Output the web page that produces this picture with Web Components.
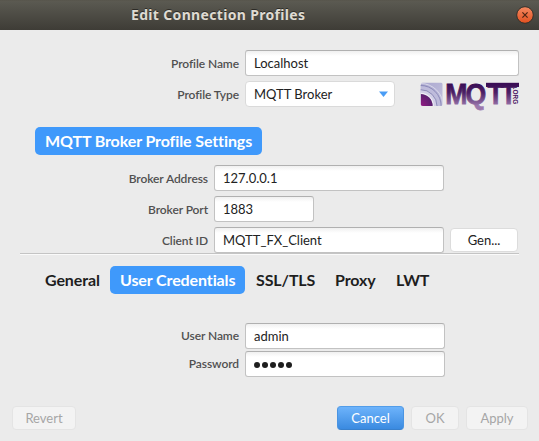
<!DOCTYPE html>
<html lang="en">
<head>
<meta charset="utf-8">
<title>Edit Connection Profiles</title>
<style>
html,body{margin:0;height:100%;overflow:hidden;background:#ebebeb}
body{font-family:Lato,"Liberation Sans",sans-serif;color:#1e1e1e}
</style>
</head>
<body>
<profile-dialog></profile-dialog>
<script>
const define = (name, html) => customElements.define(name, class extends HTMLElement {
  constructor() {
    super();
    const t = document.createElement('template');
    t.innerHTML = html;
    this.attachShadow({ mode: 'open' }).append(t.content.cloneNode(true));
  }
});

define('title-bar', `<style>
:host{display:flex;justify-content:space-between;align-items:center;height:30px;box-sizing:border-box;padding:0 5px 0 131px;background:linear-gradient(#55534a,#5c5a51 1px,#595850 3px,#3e3c36);color:#dfdbd2;font:700 14px/30px "Noto Sans","Open Sans",sans-serif;text-shadow:0 -1px 0 #2c2b27}
.t{letter-spacing:.33px}
svg{display:block;width:18px;height:18px}
</style><span class="t"><slot></slot></span>
<svg viewBox="0 0 18 18"><defs><linearGradient id="g" x2="0" y2="1"><stop stop-color="#f58a62"/><stop offset="1" stop-color="#e2501f"/></linearGradient></defs><circle cx="9" cy="9" r="8.3" fill="url(#g)" stroke="#33302a" stroke-width="1"/><path d="M6.4 6.4l5.2 5.2M11.6 6.4l-5.2 5.2" stroke="#4d2413" stroke-width="1.2"/></svg>`);

define('form-label', `<style>
:host{display:block;text-align:right;font-size:12px;font-weight:600;line-height:27px;height:26px;color:#505050;white-space:nowrap;letter-spacing:-.09px}
</style><slot></slot>`);

define('text-field', `<style>
:host{display:block;box-sizing:border-box;height:26px;border:1px solid #c2c2c2;border-top-color:#b0b0b0;border-radius:3px;background:linear-gradient(#f0f0f0,#fff 5px);padding-left:8px;font-size:13px;line-height:24px;white-space:nowrap;color:#222}
</style><slot></slot>`);

define('password-dots', `<style>
:host{display:flex;gap:1.6px;align-items:center;height:26px}
i{width:6.4px;height:6.4px;border-radius:50%;background:#1e1e1e}
</style><i></i><i></i><i></i><i></i><i></i>`);

define('combo-box', `<style>
:host{display:flex;box-sizing:border-box;width:150px;height:26px;border:1px solid #dadada;border-radius:4px;background:#fff;padding:0 6px 0 8px;font-size:13px;line-height:25px;align-items:center;justify-content:space-between;color:#222}
svg{display:block;width:9px;height:6px}
</style><slot></slot><svg viewBox="0 0 9 6"><path d="M0 .5h9L4.5 6z" fill="#4a9df5"/></svg>`);

define('push-button', `<style>
:host{display:block;box-sizing:border-box;height:24px;border:1px solid #dcdcdc;border-radius:4px;background:#fff;font-size:13px;line-height:23px;text-align:center;color:#222}
:host([disabled]){border-color:#e4e4e4;background:#f3f3f3;color:#a6a6a6}
:host([primary]){border-color:#529de9 #4a94e2 #3880cd;background:linear-gradient(#6db3fb,#3a8ae0);color:#fff}
</style><slot></slot>`);

define('tab-pill', `<style>
:host{display:block;height:28px;border-radius:5px;padding:0 10px;font-size:16px;font-weight:700;line-height:28px;letter-spacing:-.11px;white-space:nowrap;box-sizing:border-box;text-align:left}
:host([selected]){background:#3f99fb;color:#fff}
</style><slot></slot>`);

define('mqtt-logo', `<style>
:host{display:block;width:99px;height:25px}svg{display:block;overflow:visible}
</style><svg width="99" height="25" viewBox="0 0 99 25">
<defs><linearGradient id="m" gradientUnits="userSpaceOnUse" x1="0" x2="0" y1="2" y2="24"><stop stop-color="#3a0d55"/><stop offset=".4" stop-color="#4c2065"/><stop offset="1" stop-color="#9b78ad"/></linearGradient>
<linearGradient id="b" x2="1" y2="1"><stop stop-color="#a9a6ce"/><stop offset="1" stop-color="#c5c3df"/></linearGradient>
<radialGradient id="p" cx="0" cy="1" r="1" gradientUnits="objectBoundingBox"><stop stop-color="#951b84"/><stop offset="1" stop-color="#59206f"/></radialGradient>
<clipPath id="c"><rect y=".5" width="22" height="23.5" rx="2"/></clipPath></defs>
<g transform="translate(.7 0)" clip-path="url(#c)"><rect y=".5" width="22" height="24" fill="url(#b)"/>
<circle cx="0" cy="24" r="22.5" fill="none" stroke="#d9d8ea" stroke-width="1"/>
<circle cx="0" cy="24" r="20.5" fill="#bebbdb" stroke="#7f7db0" stroke-width=".8"/>
<circle cx="0" cy="24" r="16.3" fill="#d1cfe6" stroke="#8583b2" stroke-width=".9"/><circle cx="0" cy="24" r="13.2" fill="#f0eff6"/><path d="M0 12A12 12 0 0 1 12 24H0z" fill="url(#p)"/></g>
<g fill="url(#m)"><text transform="scale(.88 1)" y="22.3" x="28.6 51.6 76.8 91.6" font-family="Liberation Sans" font-weight="700" font-size="30.3" stroke="url(#m)" stroke-width=".8">MQTT</text><rect x="66" y=".8" width="33" height="4.2"/></g>
<text transform="translate(93 5.8) rotate(90)" font-family="Liberation Sans" font-weight="700" font-size="7" textLength="16.5" lengthAdjust="spacingAndGlyphs" fill="#4c1764">.ORG</text></svg>`);

define('profile-dialog', `<style>
:host{display:flex;flex-direction:column;width:539px;height:441px;background:#ebebeb}
.f{display:grid;column-gap:6px;align-items:start}
.top{grid-template-columns:239px 274px;row-gap:5px;padding-top:20px}
.row{display:flex;align-items:center;justify-content:space-between}
.pill{display:flex;padding:20px 0 0 35px}
.broker{grid-template-columns:208px 230px 68px;row-gap:5px;padding-top:10px}
.broker text-field{grid-column:2}.port{width:100px}
.gen{margin-top:1px}
hr{margin:0 20px;border:0;height:1px;background:#c4c4c4;border-bottom:1px solid #fafafa}
nav{display:flex;padding:11px 0 0 35px}
.user{grid-template-columns:239px 200px;row-gap:2px;padding-top:29px}
.user form-label{line-height:25px}
footer{display:flex;gap:7px;margin-top:auto;padding:0 11px 11px 12px}
.cancel{margin-left:auto}
</style>
<title-bar>Edit Connection Profiles</title-bar>
<div class="f top"><form-label>Profile Name</form-label><text-field>Localhost</text-field>
<form-label>Profile Type</form-label><div class="row"><combo-box>MQTT Broker</combo-box><mqtt-logo></mqtt-logo></div></div>
<div class="pill"><tab-pill selected style="width:227px">MQTT Broker Profile Settings</tab-pill></div>
<div class="f broker"><form-label>Broker Address</form-label><text-field>127.0.0.1</text-field><span></span>
<form-label>Broker Port</form-label><text-field class="port">1883</text-field><span></span>
<form-label>Client ID</form-label><text-field>MQTT_FX_Client</text-field><push-button class="gen">Gen...</push-button></div>
<hr>
<nav><tab-pill style="width:75px">General</tab-pill><tab-pill selected style="width:135px">User Credentials</tab-pill><tab-pill style="width:80px;padding-left:11px">SSL/TLS</tab-pill><tab-pill style="width:61px">Proxy</tab-pill><tab-pill style="width:56px">LWT</tab-pill></nav>
<div class="f user"><form-label>User Name</form-label><text-field>admin</text-field><form-label>Password</form-label><text-field><password-dots></password-dots></text-field></div>
<footer><push-button disabled style="width:64px">Revert</push-button><push-button class="cancel" primary style="width:67px">Cancel</push-button><push-button disabled style="width:48px">OK</push-button><push-button disabled style="width:62px">Apply</push-button></footer>`);
</script>
</body>
</html>
